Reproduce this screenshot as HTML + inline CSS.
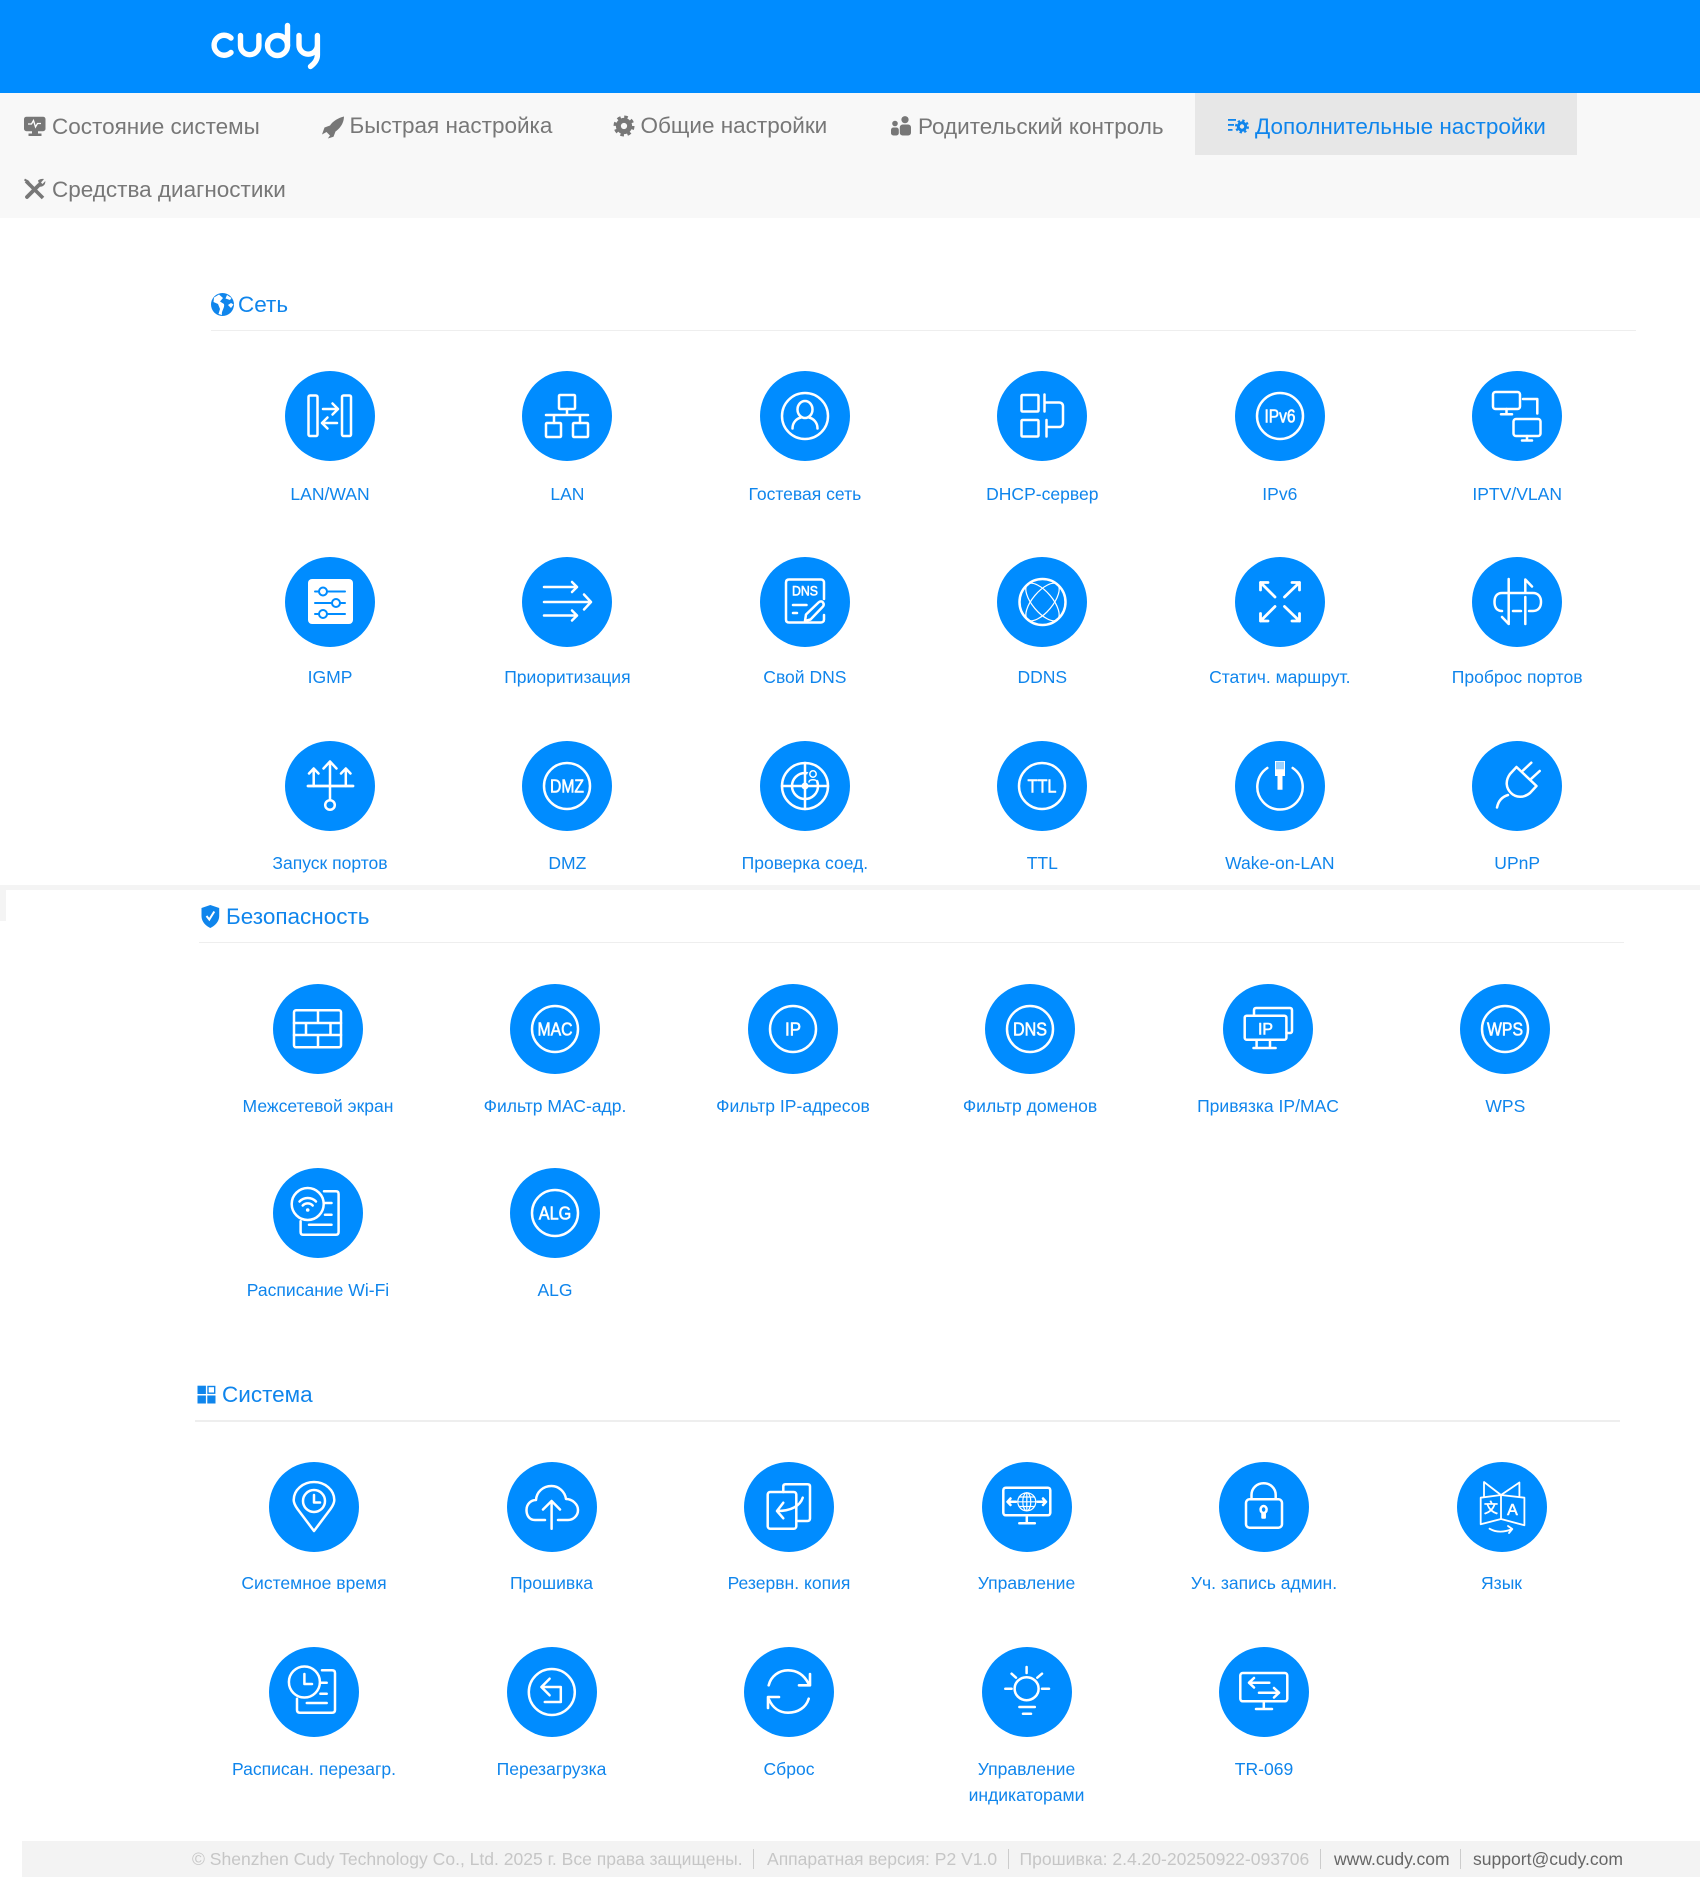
<!DOCTYPE html>
<html lang="ru"><head><meta charset="utf-8"><title>Cudy</title>
<style>
html,body{margin:0;padding:0;background:#fff}
body{position:relative;width:1700px;height:1878px;overflow:hidden;font-family:"Liberation Sans",sans-serif;color:#0f85ec}
.a{position:absolute}
.n{position:absolute;font-size:22.5px;line-height:30px;color:#777;white-space:nowrap}
.h{position:absolute;font-size:22.5px;line-height:30px;color:#0f85ec;white-space:nowrap}
.i{position:absolute;width:90px;height:90px}
.i svg{display:block;width:90px;height:90px}
.i svg *{fill:none;stroke:#fff;stroke-width:2.5;stroke-linecap:round;stroke-linejoin:round}
.i svg .b{fill:#008cff;stroke:none}
.i svg .f{fill:#fff;stroke:none}
.i svg .u{stroke:#008cff;stroke-width:2}
.i svg .th{stroke-width:1.2}
.i svg text{fill:#fff;stroke:#fff;stroke-width:.6;font-family:"Liberation Sans",sans-serif;font-weight:normal;font-size:18px;text-anchor:middle}
.t{position:absolute;left:-70px;width:230px;top:109px;text-align:center;font-size:17.55px;line-height:26px;color:#0f85ec}
.t.r1{top:109.5px}
.t.r2{top:107.5px}
.t.r3{top:108px}
.p{position:absolute;top:1847px;font-size:17.55px;line-height:24px;color:#c6c6c6;white-space:nowrap}
.k{color:#666}
.s{position:absolute;top:1849px;height:20px;width:1px;background:#ccc}
</style></head><body>
<div class="a" style="left:0;top:0;width:1700px;height:93px;background:#008cff"></div>
<svg class="a" style="left:200px;top:15px" width="130" height="60" viewBox="200 15 130 60"><title>cudy</title><g fill="none" stroke="#fff" stroke-width="5.4" stroke-linecap="round" stroke-linejoin="round"><path d="M231 38A10 10 0 1 0 231 52.500"/><path d="M240.500 35.500V45.500A9.200 9.200 0 0 0 258.900 45.500V35.500"/><circle cx="277.500" cy="45.500" r="10"/><path d="M287.500 25.500V46"/><path d="M299 35.500V45A9.200 9.200 0 0 0 317.400 45V35.500V55C317.400 60 314.500 63.500 310.500 66.500"/></g></svg>
<div class="a" style="left:0;top:93px;width:1700px;height:125px;background:#f8f8f8"></div>
<div class="a" style="left:1195px;top:93px;width:382px;height:62px;background:#e7e7e7"></div>
<svg class="a" style="left:0;top:93px" width="1700" height="125" viewBox="0 93 1700 125">
<g fill="#777">
<rect x="24" y="116.700" width="21.500" height="14.500" rx="2.500"/><rect x="32" y="131" width="6" height="3"/><rect x="28.500" y="133.500" width="13" height="2.500"/>
<path d="M28 124H31.500L33.500 120.500L35.500 127L37.500 123.500H41" fill="none" stroke="#fff" stroke-width="1.300"/>
<path d="M344 116.500C338 118 333 121 330 125.500L324.500 127.500L322 134.500L326.500 132L330 135.500L327.800 138.500L333.500 136.800L335.500 131.500C340.500 128 343.800 123 344 116.500Z"/>
<circle cx="624" cy="126" r="5.600" fill="none" stroke="#777" stroke-width="5"/><circle cx="624" cy="126" r="9" fill="none" stroke="#777" stroke-width="3" stroke-dasharray="3.530 3.530"/>
<circle cx="905" cy="119.700" r="3.600"/><rect x="899.800" y="124.500" width="11.200" height="11" rx="2.800"/><circle cx="895" cy="123.500" r="2.800"/><rect x="891" y="127.500" width="7.800" height="8" rx="2.400"/>
<path d="M26 181L43 198" fill="none" stroke="#777" stroke-width="3.600"/><path d="M24.500 179.500L28 181.500L27 183L30 186" fill="none" stroke="#777" stroke-width="2"/><path d="M27 197L39 185" fill="none" stroke="#777" stroke-width="3.800" stroke-linecap="round"/><path d="M38 180.500C40 178.800 42 178.700 44 179L41 182.500L42.500 184L45.300 181C45.600 184 44 186.500 40 186.800Z"/>
</g>
<g fill="#0f85ec"><rect x="1228" y="119" width="8" height="1.800"/><rect x="1228" y="124" width="6" height="1.800"/><rect x="1228" y="129" width="4.500" height="1.800"/>
<circle cx="1242" cy="126.500" r="3.700" fill="none" stroke="#0f85ec" stroke-width="3"/><circle cx="1242" cy="126.500" r="6" fill="none" stroke="#0f85ec" stroke-width="2" stroke-dasharray="2.360 2.360"/></g>
</svg>
<div class="n" style="left:52px;top:112px">Состояние системы</div>
<div class="n" style="left:349.500px;top:111px">Быстрая настройка</div>
<div class="n" style="left:640.500px;top:111px">Общие настройки</div>
<div class="n" style="left:918px;top:112px">Родительский контроль</div>
<div class="n" style="left:1255px;top:112px;color:#0f85ec">Дополнительные настройки</div>
<div class="n" style="left:52px;top:175px">Средства диагностики</div>

<svg class="a" style="left:205px;top:290px" width="36" height="30" viewBox="205 290 36 30"><circle cx="222.500" cy="304.500" r="11.500" fill="#0f85ec"/><path d="M219 294.500L214 297.500L213.500 302L218 304L220 309L218.500 314L222 315C221 311 225 308 224 304L220 301.500L223 298ZM227 295L225.500 298.500L230 300L231.500 298ZM228 305L231 308L233.500 304.500L231 303Z" fill="#fff"/></svg>
<div class="h" style="left:238px;top:289.500px">Сеть</div>
<div class="a" style="left:211px;top:329.500px;width:1425px;height:1.500px;background:#eee"></div>

<div class="a" style="left:0;top:885px;width:1700px;height:5px;background:#f4f4f4"></div>
<div class="a" style="left:0;top:890px;width:6px;height:31px;background:#f4f4f4"></div>
<svg class="a" style="left:198px;top:902px" width="26" height="30" viewBox="198 902 26 30"><path d="M210.300 905L219.200 908V916C219.200 922 214.500 926 210.300 928C206 926 201.500 922 201.500 916V908Z" fill="#0f85ec"/><path d="M206.500 916L209.300 919.500L214.300 911.500" fill="none" stroke="#fff" stroke-width="2"/></svg>
<div class="h" style="left:226px;top:902px">Безопасность</div>
<div class="a" style="left:199px;top:941.500px;width:1425px;height:1.500px;background:#eee"></div>

<svg class="a" style="left:195px;top:1383px" width="24" height="24" viewBox="195 1383 24 24"><rect x="197.500" y="1385.700" width="8.400" height="8.300" fill="#0f85ec"/><rect x="208" y="1386.500" width="6.700" height="6.700" fill="none" stroke="#0f85ec" stroke-width="1.400"/><rect x="197.500" y="1395.500" width="8.400" height="8" fill="#0f85ec"/><rect x="207.300" y="1395.500" width="8.200" height="8" fill="#0f85ec"/></svg>
<div class="h" style="left:222px;top:1380px">Система</div>
<div class="a" style="left:195px;top:1420px;width:1425px;height:1.500px;background:#eee"></div>

<!-- Network row 1 -->
<div class="i" style="left:285px;top:371px"><svg viewBox="0 0 90 90"><circle class="b" cx="45" cy="45" r="45"/><rect x="23.500" y="24.500" width="9" height="40.500" rx="1.500"/><rect x="57" y="24.500" width="9" height="40.500" rx="1.500"/><path d="M38 38H53M47.500 32.500L53 38L47.500 43.500M52 52H37M42.500 46.500L37 52L42.500 57.500"/></svg><div class="t r1">LAN/WAN</div></div>
<div class="i" style="left:522.400px;top:371px"><svg viewBox="0 0 90 90"><circle class="b" cx="45" cy="45" r="45"/><rect x="37" y="24" width="16" height="14" rx="1"/><path d="M45 38V44M24 44H66M32 44V52M58 44V52"/><rect x="24" y="52" width="15" height="14" rx="1"/><rect x="51" y="52" width="15" height="14" rx="1"/></svg><div class="t r1">LAN</div></div>
<div class="i" style="left:759.900px;top:371px"><svg viewBox="0 0 90 90"><circle class="b" cx="45" cy="45" r="45"/><circle cx="45" cy="45" r="23"/><ellipse cx="45" cy="38.500" rx="7.500" ry="8.500"/><path d="M32.500 57.500C32.500 51 37 47.500 41 46.500M57.500 57.500C57.500 51 53 47.500 49 46.500"/></svg><div class="t r1">Гостевая сеть</div></div>
<div class="i" style="left:997.300px;top:371px"><svg viewBox="0 0 90 90"><circle class="b" cx="45" cy="45" r="45"/><rect x="24.500" y="24" width="17" height="16.500" rx="1"/><rect x="24.500" y="49" width="17" height="16.500" rx="1"/><path d="M47.500 23.500V40.500M47.500 31.500H62C64.500 31.500 66 33 66 35.500V52C66 54.500 64.500 56 62 56H50M49.500 49V65.500"/></svg><div class="t r1">DHCP-сервер</div></div>
<div class="i" style="left:1234.800px;top:371px"><svg viewBox="0 0 90 90"><circle class="b" cx="45" cy="45" r="45"/><circle cx="45" cy="45" r="23"/><text x="45" y="51.500" textLength="31" lengthAdjust="spacingAndGlyphs">IPv6</text></svg><div class="t r1">IPv6</div></div>
<div class="i" style="left:1472.200px;top:371px"><svg viewBox="0 0 90 90"><circle class="b" cx="45" cy="45" r="45"/><rect x="21" y="21" width="27" height="17" rx="2.500"/><path d="M34.500 38V43M29 43.300H40M51 28H65.300V42.500"/><rect x="41.500" y="48" width="27" height="17" rx="2.500"/><path d="M55 65V69.500M50 69.500H60"/></svg><div class="t r1">IPTV/VLAN</div></div>
<!-- Network row 2 -->
<div class="i" style="left:285px;top:556.500px"><svg viewBox="0 0 90 90"><circle class="b" cx="45" cy="45" r="45"/><rect class="f" x="23" y="22" width="45" height="45" rx="4"/><path class="u" d="M30 34.500H60M30 46H60M30 57H60"/><circle class="f" cx="38" cy="34.500" r="4"/><circle class="u" cx="38" cy="34.500" r="4"/><circle class="f" cx="51" cy="46" r="4"/><circle class="u" cx="51" cy="46" r="4"/><circle class="f" cx="38" cy="57" r="4"/><circle class="u" cx="38" cy="57" r="4"/></svg><div class="t r2">IGMP</div></div>
<div class="i" style="left:522.400px;top:556.500px"><svg viewBox="0 0 90 90"><circle class="b" cx="45" cy="45" r="45"/><path d="M22 30H55M50 25L55 30L50 35M22 45H69M62 37.500L69 45L62 52.500M22 58.500H55M50 53.500L55 58.500L50 63.500"/></svg><div class="t r2">Приоритизация</div></div>
<div class="i" style="left:759.900px;top:556.500px"><svg viewBox="0 0 90 90"><circle class="b" cx="45" cy="45" r="45"/><path d="M64 42V25.500C64 23.500 62.500 22.500 61 22.500H29C27 22.500 26 23.500 26 25.500V62.500C26 64.500 27 65.500 29 65.500H61C62.500 65.500 64 64.500 64 62.500V58"/><text x="45" y="38.500" textLength="26" lengthAdjust="spacingAndGlyphs" style="font-size:14px">DNS</text><path d="M33 48H46.500M33 56H37"/><path d="M45 64L46 57.500L58.500 45.500C60 44 62 44 63 45.500C64 47 64 48.500 62.500 50L50.500 62.500Z"/></svg><div class="t r2">Свой DNS</div></div>
<div class="i" style="left:997.300px;top:556.500px"><svg viewBox="0 0 90 90"><circle class="b" cx="45" cy="45" r="45"/><circle cx="45.500" cy="45" r="23"/><ellipse cx="45.500" cy="45" rx="23" ry="10" transform="rotate(50 45.500 45)" class="th"/><ellipse cx="45.500" cy="45" rx="23" ry="10" transform="rotate(-50 45.500 45)" class="th"/></svg><div class="t r2">DDNS</div></div>
<div class="i" style="left:1234.800px;top:556.500px"><svg viewBox="0 0 90 90"><circle class="b" cx="45" cy="45" r="45"/><path style="stroke-width:2.800" d="M25.500 25.500L40 40M25.500 33V25.500H33M64.500 25.500L49.500 40M57 25.500H64.500V33M25.500 64L40 49.500M25.500 56.500V64H33M64.500 64L49.500 49.500M64.500 56.500V64H57"/></svg><div class="t r2">Статич. маршрут.</div></div>
<div class="i" style="left:1472.200px;top:556.500px"><svg viewBox="0 0 90 90"><circle class="b" cx="45" cy="45" r="45"/><path d="M36.700 22V46M30 36H61C66 36 69 39.500 69 45C69 50.500 66 54 61 54H57M30 36C25 36 22.500 39.500 22.500 45C22.500 50.500 25 54 30 54M41 54H49M53.300 67V40M53.300 36V22.500L60 29.500M36.700 46V67L30 60"/></svg><div class="t r2">Проброс портов</div></div>
<!-- Network row 3 -->
<div class="i" style="left:285px;top:740.500px"><svg viewBox="0 0 90 90"><circle class="b" cx="45" cy="45" r="45"/><path style="stroke-width:2.800" d="M23 45H68"/><path d="M45 45V20.500M38.500 27.500L45 20.500L51.500 27.500M28.700 45V27.500M24 32.500L28.700 27.500L33.500 32.500M60.800 45V27.500M56 32.500L60.800 27.500L65.500 32.500M45 45V59"/><circle cx="45" cy="64" r="4.800"/></svg><div class="t">Запуск портов</div></div>
<div class="i" style="left:522.400px;top:740.500px"><svg viewBox="0 0 90 90"><circle class="b" cx="45" cy="45" r="45"/><circle cx="45" cy="45" r="23"/><text x="45" y="51.500" textLength="34" lengthAdjust="spacingAndGlyphs">DMZ</text></svg><div class="t">DMZ</div></div>
<div class="i" style="left:759.900px;top:740.500px"><svg viewBox="0 0 90 90"><circle class="b" cx="45" cy="45" r="45"/><circle cx="45" cy="45" r="23"/><circle cx="45" cy="45" r="13"/><circle cx="45" cy="45" r="3.500" class="f"/><path d="M45 22V68M22 45H68"/><circle class="b" cx="53" cy="35" r="6"/><circle cx="53" cy="33" r="3.200" style="stroke-width:1.500"/><path style="stroke-width:1.500" d="M49 41C49 38 57 38 57 41"/></svg><div class="t">Проверка соед.</div></div>
<div class="i" style="left:997.300px;top:740.500px"><svg viewBox="0 0 90 90"><circle class="b" cx="45" cy="45" r="45"/><circle cx="45" cy="45" r="23"/><text x="45" y="51.500" textLength="29" lengthAdjust="spacingAndGlyphs">TTL</text></svg><div class="t">TTL</div></div>
<div class="i" style="left:1234.800px;top:740.500px"><svg viewBox="0 0 90 90"><circle class="b" cx="45" cy="45" r="45"/><path d="M32.300 27A22.700 22.700 0 1 0 57.700 27"/><path class="f" d="M40 20H50V35H47.500V48.700H42.500V35H40Z"/><path class="u" style="stroke-width:.8" d="M42 21V28M44 21V28M46 21V28M48 21V28"/></svg><div class="t">Wake-on-LAN</div></div>
<div class="i" style="left:1472.200px;top:740.500px"><svg viewBox="0 0 90 90"><circle class="b" cx="45" cy="45" r="45"/><path d="M51 29.500L59.300 21.700M59.300 37.700L67.700 30M44.500 26L64.500 45L58 52C52 57 44 57 39 52C34 47 33 40 38 33Z"/><path d="M36 54C31 55.500 26.500 59 25 66.500"/></svg><div class="t">UPnP</div></div>

<!-- Security row 1 -->
<div class="i" style="left:273px;top:984px"><svg viewBox="0 0 90 90"><circle class="b" cx="45" cy="45" r="45"/><rect x="21" y="26.300" width="47" height="37" rx="2"/><path d="M21 39H68M21 51H68M45 26.300V39M33 39V51M57.500 39V51M45 51V63.300"/></svg><div class="t">Межсетевой экран</div></div>
<div class="i" style="left:510px;top:984px"><svg viewBox="0 0 90 90"><circle class="b" cx="45" cy="45" r="45"/><circle cx="45" cy="45" r="23"/><text x="45" y="51.500" textLength="35" lengthAdjust="spacingAndGlyphs">MAC</text></svg><div class="t">Фильтр МАС-адр.</div></div>
<div class="i" style="left:748px;top:984px"><svg viewBox="0 0 90 90"><circle class="b" cx="45" cy="45" r="45"/><circle cx="45" cy="45" r="23"/><text x="45" y="51.500" textLength="16" lengthAdjust="spacingAndGlyphs">IP</text></svg><div class="t">Фильтр IP-адресов</div></div>
<div class="i" style="left:985px;top:984px"><svg viewBox="0 0 90 90"><circle class="b" cx="45" cy="45" r="45"/><circle cx="45" cy="45" r="23"/><text x="45" y="51.500" textLength="34" lengthAdjust="spacingAndGlyphs">DNS</text></svg><div class="t">Фильтр доменов</div></div>
<div class="i" style="left:1223px;top:984px"><svg viewBox="0 0 90 90"><circle class="b" cx="45" cy="45" r="45"/><path d="M31 31.700V26C31 24.800 31.800 24 33 24H67C68.200 24 69 24.800 69 26V47C69 48.200 68.200 49 67 49H63.500"/><rect x="21.700" y="31.700" width="41.700" height="24" rx="2"/><text x="42.500" y="50.500" textLength="15" lengthAdjust="spacingAndGlyphs" style="font-size:17px">IP</text><path d="M33.600 55.700V64M47 55.700V64M30.500 64H52.600"/></svg><div class="t">Привязка IP/MAC</div></div>
<div class="i" style="left:1460.300px;top:984px"><svg viewBox="0 0 90 90"><circle class="b" cx="45" cy="45" r="45"/><circle cx="45" cy="45" r="23"/><text x="45" y="51.500" textLength="36" lengthAdjust="spacingAndGlyphs">WPS</text></svg><div class="t">WPS</div></div>
<!-- Security row 2 -->
<div class="i" style="left:273px;top:1168px"><svg viewBox="0 0 90 90"><circle class="b" cx="45" cy="45" r="45"/><circle cx="34.700" cy="36" r="16"/><path d="M26.500 33.500A11.500 11.500 0 0 1 43 33.500M29.700 37.500A7 7 0 0 1 39.700 37.500"/><circle class="f" cx="34.700" cy="42" r="1.800"/><path d="M51 23.300H63C64.800 23.300 65.600 24.200 65.600 26V64C65.600 65.800 64.800 66.700 63 66.700H30C28.300 66.700 27.600 65.800 27.600 64V53.300M52 35H58.500M52 46.700H58.500M36 56.700H58.500"/></svg><div class="t">Расписание Wi-Fi</div></div>
<div class="i" style="left:510px;top:1168px"><svg viewBox="0 0 90 90"><circle class="b" cx="45" cy="45" r="45"/><circle cx="45" cy="45" r="23"/><text x="45" y="51.500" textLength="32.500" lengthAdjust="spacingAndGlyphs">ALG</text></svg><div class="t">ALG</div></div>

<!-- System row 1 -->
<div class="i" style="left:269px;top:1462px"><svg viewBox="0 0 90 90"><circle class="b" cx="45" cy="45" r="45"/><path d="M45 69L28.500 47C26 43.500 24.700 41 24.700 38A20.300 18 0 0 1 65.300 38C65.300 41 64 43.500 61.500 47Z"/><circle cx="45" cy="39" r="11"/><path d="M45 33V40.500H51"/></svg><div class="t r3">Системное время</div></div>
<div class="i" style="left:506.500px;top:1462px"><svg viewBox="0 0 90 90"><circle class="b" cx="45" cy="45" r="45"/><path d="M38 58H28C22 58 19.500 53 19.500 48C19.500 42 24 38 29 38C29.500 30 36 24 44.500 24C52 24 58 30 59 37C65 37 71 42 71 48C71 54 66 58 61 58H51"/><path d="M44.600 39V66.700M36 47.500L44.600 39L53 47.500"/></svg><div class="t r3">Прошивка</div></div>
<div class="i" style="left:744px;top:1462px"><svg viewBox="0 0 90 90"><circle class="b" cx="45" cy="45" r="45"/><path d="M39.300 30V24.500C39.300 23 40 22.300 41.500 22.300H63.500C65 22.300 66 23 66 24.500V56.500C66 58 65 59 63.500 59H54"/><rect x="23.700" y="30" width="28.600" height="36.700" rx="2.500"/><path d="M58.700 35.700C56 44 47 49 33 49M39.300 40.700L33 49L39.300 56.300"/></svg><div class="t r3">Резервн. копия</div></div>
<div class="i" style="left:981.500px;top:1462px"><svg viewBox="0 0 90 90"><circle class="b" cx="45" cy="45" r="45"/><rect x="21.300" y="25.700" width="47" height="27.600" rx="2.500"/><path d="M44.800 53.300V61.300M37.300 61.300H52.800"/><path d="M25.500 39.800H34M28.500 36.500L25.500 39.800L28.500 43M55.500 39.800H64M61 36.500L64 39.800L61 43"/><circle class="th" cx="44.800" cy="39.800" r="9"/><ellipse class="th" cx="44.800" cy="39.800" rx="4" ry="9"/><path class="th" d="M35.800 39.800H53.800M37 35H52.500M37 44.500H52.500M44.800 30.800V48.800"/></svg><div class="t r3">Управление</div></div>
<div class="i" style="left:1219px;top:1462px"><svg viewBox="0 0 90 90"><circle class="b" cx="45" cy="45" r="45"/><rect x="27" y="37.300" width="36" height="28.400" rx="3.500"/><path d="M32.500 37V33C32.500 26 38 21.300 44.600 21.300C51.200 21.300 56.700 26 56.700 33V37"/><ellipse cx="44.600" cy="47.500" rx="3" ry="3.500"/><path d="M43.500 51V55.500H45.700V51"/></svg><div class="t r3">Уч. запись админ.</div></div>
<div class="i" style="left:1456.500px;top:1462px"><svg viewBox="0 0 90 90"><circle class="b" cx="45" cy="45" r="45"/><path d="M44 33L23.700 35.700V62.300L44 57ZM44 33L67.400 35.700V63.300L44 57ZM27 34.500V20L44 33L62.400 20.500V34.500" style="stroke-width:1.800"/><text x="55.500" y="53" style="font-size:16px">A</text><text x="34" y="51" style="font-size:14px;font-family:'Noto Sans CJK SC',sans-serif">文</text><path d="M32.500 66.700C39 70.500 47 70.500 55.300 67M51 64L55.300 67L52 71" style="stroke-width:1.800"/></svg><div class="t r3">Язык</div></div>
<!-- System row 2 -->
<div class="i" style="left:269px;top:1646.500px"><svg viewBox="0 0 90 90"><circle class="b" cx="45" cy="45" r="45"/><circle cx="35.400" cy="35" r="15.500"/><path d="M35.400 27V37H43"/><path d="M53 23.300H63C65 23.300 66 24.300 66 26V63C66 64.800 65 65.700 63 65.700H31C29 65.700 28 64.800 28 63V51.700M51.400 35.700H57.700M51.400 46.700H57.700M37.800 56H57.700"/></svg><div class="t">Расписан. перезагр.</div></div>
<div class="i" style="left:506.500px;top:1646.500px"><svg viewBox="0 0 90 90"><circle class="b" cx="45" cy="45" r="45"/><circle cx="44.800" cy="45" r="23"/><path d="M34.400 40H53.800V55H37.800M42.600 31.700L34.400 40L42.600 48.300"/></svg><div class="t">Перезагрузка</div></div>
<div class="i" style="left:744px;top:1646.500px"><svg viewBox="0 0 90 90"><circle class="b" cx="45" cy="45" r="45"/><path style="stroke-width:2.600" d="M24.700 38.300C27 29 35 23.300 44 23.300C53 23.300 60 28 64.500 36.500M66 27V38.300H55M64.700 51.700C62 60.500 54 65.700 44 65.700C35 65.700 28.500 60.500 25 52.500M24 61V50H35"/></svg><div class="t">Сброс</div></div>
<div class="i" style="left:981.500px;top:1646.500px"><svg viewBox="0 0 90 90"><circle class="b" cx="45" cy="45" r="45"/><ellipse cx="44.600" cy="41.700" rx="12" ry="11.500"/><path d="M44.600 20V26M29.600 26.700L34 30.700M60 26.700L55.300 30.700M23.300 41.700H29.600M60 41.700H67M37.400 60H52.800M41 66.700H49"/></svg><div class="t">Управление<br>индикаторами</div></div>
<div class="i" style="left:1219px;top:1646.500px"><svg viewBox="0 0 90 90"><circle class="b" cx="45" cy="45" r="45"/><rect x="21.300" y="26" width="47" height="28.300" rx="2.500"/><path d="M44.800 54.300V62M37 62H53M30 35.700H50.300M35 31L30 35.700L35 40.500M40 45.700H60M55 41L60 45.700L55 50.500"/></svg><div class="t">TR-069</div></div>

<div class="a" style="left:22px;top:1841px;width:1678px;height:36px;background:#f3f3f3"></div>
<div class="p" style="left:192px">© Shenzhen Cudy Technology Co., Ltd. 2025 г. Все права защищены.</div><div class="s" style="left:752.500px"></div>
<div class="p" style="left:767px">Аппаратная версия: P2 V1.0</div><div class="s" style="left:1007.500px"></div>
<div class="p" style="left:1019.500px">Прошивка: 2.4.20-20250922-093706</div><div class="s" style="left:1320px"></div>
<div class="p k" style="left:1334px">www.cudy.com</div><div class="s" style="left:1460px"></div>
<div class="p k" style="left:1473px">support@cudy.com</div>
</body></html>
